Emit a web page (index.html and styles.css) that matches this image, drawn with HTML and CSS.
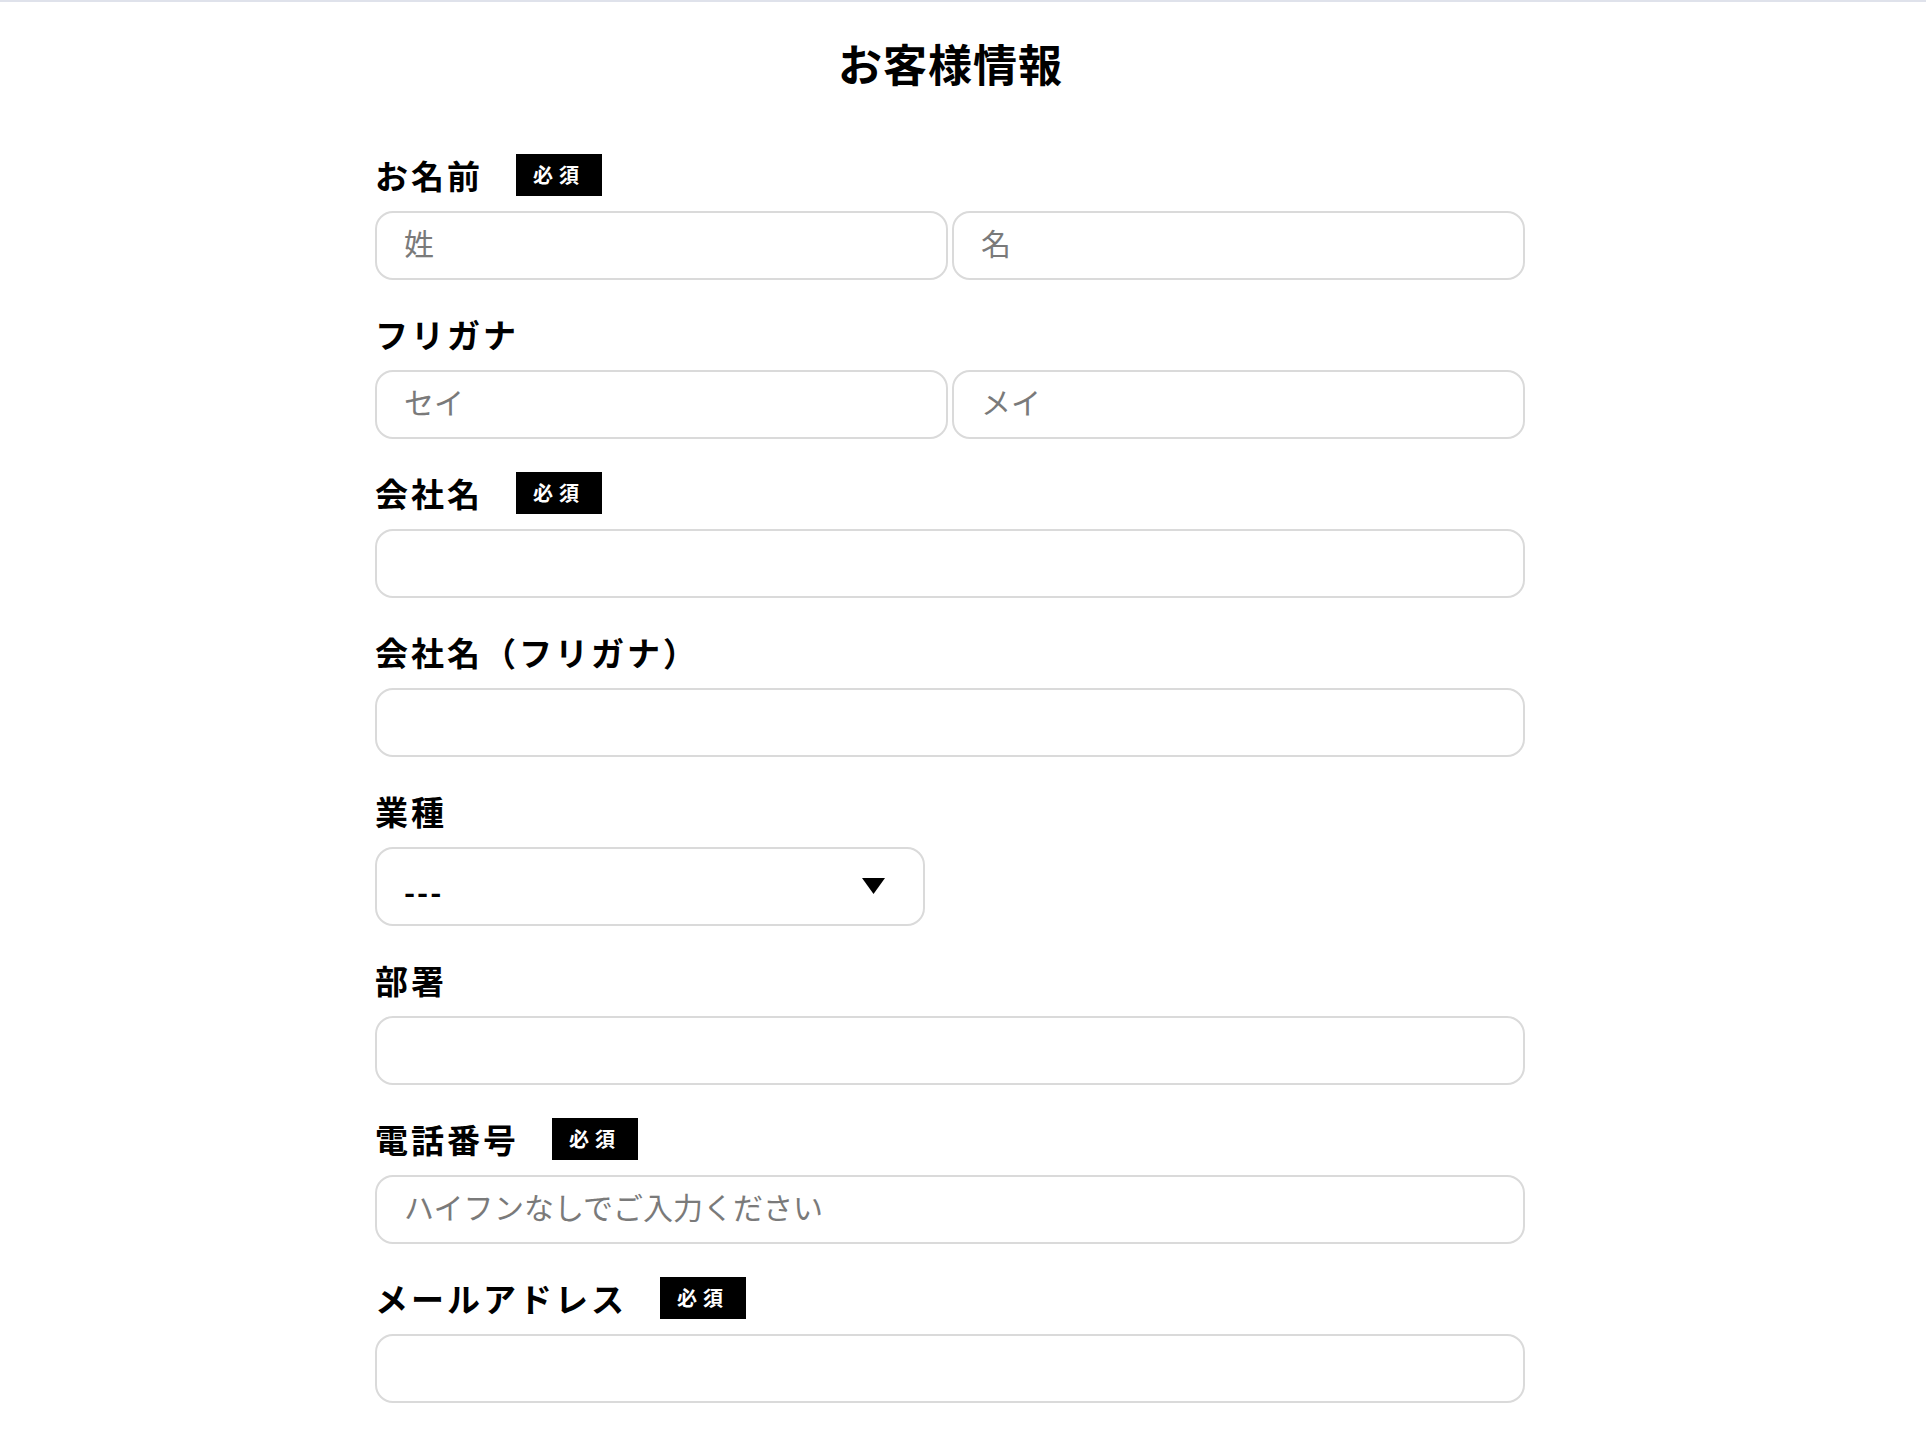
FILE: index.html
```html
<!DOCTYPE html>
<html lang="ja">
<head>
    <meta charset="UTF-8">
    <meta name="viewport" content="width=device-width, initial-scale=1.0">
    <title>お客様情報</title>
    <link rel="stylesheet" href="styles.css">
</head>
<body>
    <div class="pagina">
        <form id="form_cliente" class="form_cliente">
            <h2 class="titulo">お客様情報</h2>

            <div class="campo">
                <div class="rotulo">
                    <label for="sei">お名前</label>
                    <span class="obrigatorio">必須</span>
                </div>
                <div class="linha_dupla">
                    <input type="text" id="sei" class="entrada" placeholder="姓">
                    <input type="text" id="mei" class="entrada" placeholder="名">
                </div>
            </div>

            <div class="campo">
                <div class="rotulo">
                    <label for="sei_kana">フリガナ</label>
                </div>
                <div class="linha_dupla">
                    <input type="text" id="sei_kana" class="entrada" placeholder="セイ">
                    <input type="text" id="mei_kana" class="entrada" placeholder="メイ">
                </div>
            </div>

            <div class="campo">
                <div class="rotulo">
                    <label for="empresa">会社名</label>
                    <span class="obrigatorio">必須</span>
                </div>
                <input type="text" id="empresa" class="entrada">
            </div>

            <div class="campo">
                <div class="rotulo">
                    <label for="empresa_kana">会社名（フリガナ）</label>
                </div>
                <input type="text" id="empresa_kana" class="entrada">
            </div>

            <div class="campo">
                <div class="rotulo">
                    <label for="setor">業種</label>
                </div>
                <div class="caixa_select">
                    <select id="setor" class="select">
                        <option>---</option>
                    </select>
                    <svg class="seta" width="23" height="16" viewBox="0 0 23 16">
                        <polygon points="0,0 23,0 11.5,16" fill="#000"/>
                    </svg>
                </div>
            </div>

            <div class="campo">
                <div class="rotulo">
                    <label for="departamento">部署</label>
                </div>
                <input type="text" id="departamento" class="entrada">
            </div>

            <div class="campo">
                <div class="rotulo">
                    <label for="telefone">電話番号</label>
                    <span class="obrigatorio">必須</span>
                </div>
                <input type="tel" id="telefone" class="entrada" placeholder="ハイフンなしでご入力ください">
            </div>

            <div class="campo">
                <div class="rotulo">
                    <label for="email">メールアドレス</label>
                    <span class="obrigatorio">必須</span>
                </div>
                <input type="email" id="email" class="entrada">
            </div>
        </form>
    </div>
</body>
</html>
```

FILE: styles.css
```css
*{
    padding: 0px;
    margin: 0px;
    box-sizing: border-box;
}
body{
    font-family: "Noto Sans CJK JP", "Noto Sans", sans-serif;
    color: #000;
    background-color: #fff;
    border-top: 2px solid #dfe2eb;
}
.pagina{
    padding-right: 26px;
}
.form_cliente{
    display: flex;
    flex-direction: column;
    width: 1150px;
    margin: 0 auto;
}
.titulo{
    font-size: 44px;
    font-weight: bold;
    letter-spacing: 1px;
    line-height: 60px;
    text-align: center;
    padding-left: 1px;
    margin-top: 31px;
    margin-bottom: 61px;
}
.campo{
    display: flex;
    flex-direction: column;
    gap: 15px;
    margin-bottom: 33px;
}
.rotulo{
    display: flex;
    align-items: center;
    gap: 33px;
    height: 42px;
}
.rotulo label{
    font-size: 33px;
    font-weight: bold;
    letter-spacing: 3px;
    line-height: 42px;
}
.obrigatorio{
    background-color: #000;
    color: #fff;
    font-size: 20px;
    font-weight: bold;
    letter-spacing: 6px;
    line-height: 42px;
    padding: 0 17px;
}
.linha_dupla{
    display: flex;
    gap: 4px;
}
.linha_dupla .entrada{
    flex: 1;
}
.entrada{
    width: 100%;
    height: 69px;
    flex-shrink: 0;
    border: 2px solid #dadada;
    border-radius: 18px;
    padding: 0 27px 8px;
    font-family: inherit;
    font-size: 30px;
    color: #000;
    background-color: #fff;
    outline: none;
}
.entrada::placeholder{
    color: #7a7a7a;
}
.caixa_select{
    position: relative;
    width: 550px;
}
.select{
    appearance: none;
    width: 100%;
    height: 79px;
    border: 2px solid #dadada;
    border-radius: 18px;
    padding: 8px 27px 0;
    font-family: inherit;
    font-size: 30px;
    font-weight: bold;
    letter-spacing: 2px;
    color: #000;
    background-color: #fff;
    outline: none;
}
.seta{
    position: absolute;
    right: 40px;
    top: 31px;
    pointer-events: none;
}
```
